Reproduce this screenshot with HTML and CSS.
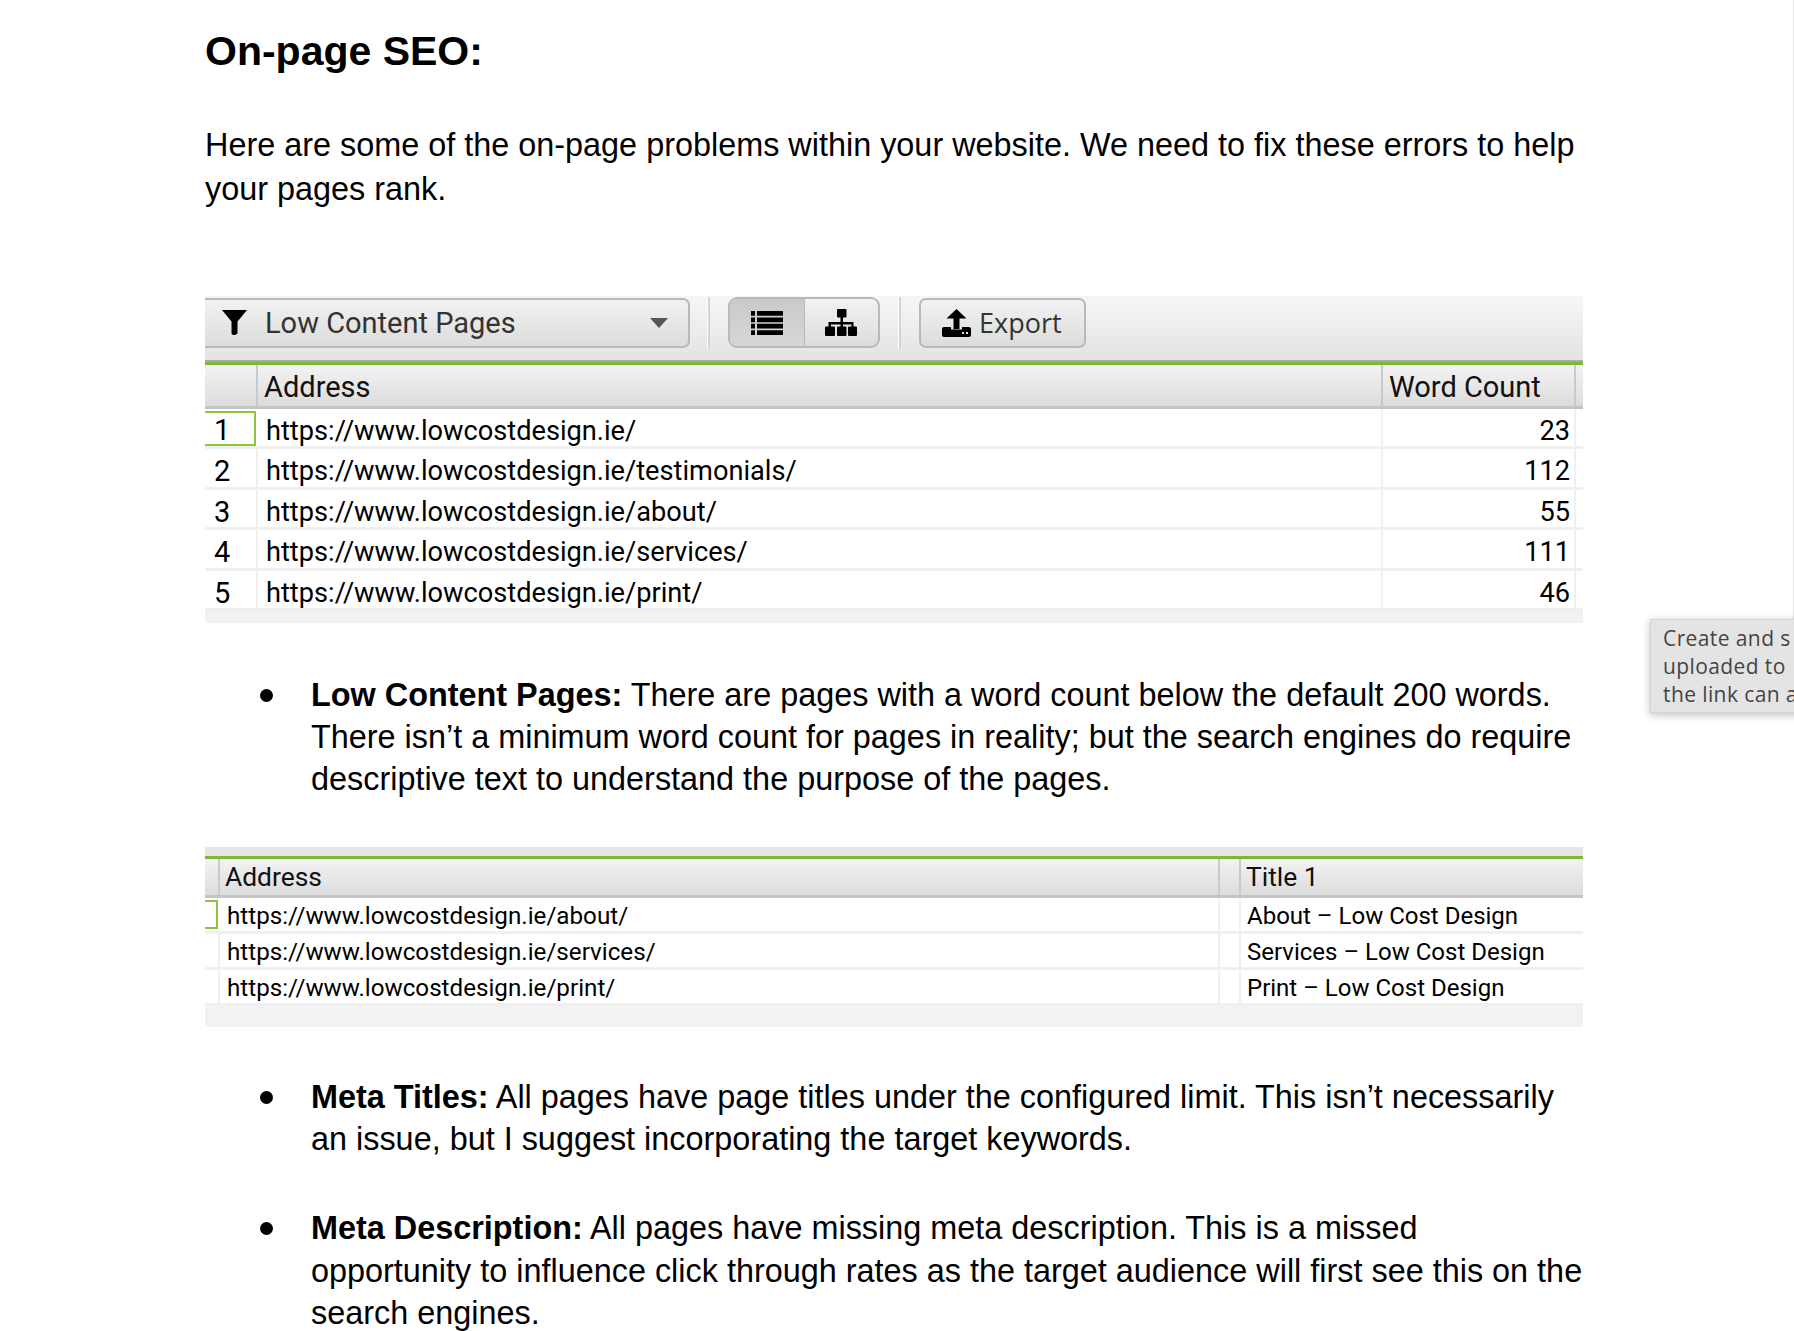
FILE: index.html
```html
<!DOCTYPE html>
<html lang="en">
<head>
  <meta charset="UTF-8">
  <title>On-page SEO</title>
  <link rel="stylesheet" href="styles.css">
</head>
<body>
  <div class="doc">
    <h1>On-page SEO:</h1>
    <p class="intro">Here are some of the on-page problems within your website. We need to fix these errors to help your pages rank.</p>

    <div class="shot shot-one">
      <div class="toolbar">
        <div class="btn filter">
          <svg class="icon-funnel" viewBox="0 0 25 25"><path d="M0 0h25L15.500 11.500V23.500L13 25H11L9.500 23.500V11.500z"/></svg>
          <span>Low Content Pages</span>
          <svg class="icon-caret" viewBox="0 0 18 10"><path d="M0 0h18L9 10z"/></svg>
        </div>
        <div class="sep"></div>
        <div class="toggle">
          <div class="toggle-item active">
            <svg class="icon-list" viewBox="0 0 32 24"><path d="M0 0h4v4.800H0zM6 0h26v4.800H6zM0 6.400h4v4.800H0zM6 6.400h26v4.800H6zM0 12.800h4v4.800H0zM6 12.800h26v4.800H6zM0 19.200h4V24H0zM6 19.200h26V24H6z"/></svg>
          </div>
          <div class="toggle-item">
            <svg class="icon-tree" viewBox="0 0 32 27"><path d="M12 1q0-1 1-1h7.500q1 0 1 1v6.500q0 1-1 1H18V13h10.500v4.500h2.500q1 0 1 1V26q0 1-1 1h-7q-1 0-1-1v-7.500q0-1 1-1h2.500v-2H18v2h2.500q1 0 1 1V26q0 1-1 1H13q-1 0-1-1v-7.500q0-1 1-1h2.500v-2H6v2h3q1 0 1 1V26q0 1-1 1H1q-1 0-1-1v-7.500q0-1 1-1h2.500V13h12V8.500H13q-1 0-1-1z"/></svg>
          </div>
        </div>
        <div class="sep"></div>
        <div class="btn export">
          <svg class="icon-upload" viewBox="0 0 29 28"><path d="M14.500 0l10 9.500h-7V20h-6V9.500h-7zM2 18h7v2.500h11V18h7q2 0 2 2v6q0 2-2 2H2q-2 0-2-2v-6q0-2 2-2z"/><path class="dots" d="M20 23h2v2h-2zM24 23h2v2h-2z"/></svg>
          <span>Export</span>
        </div>
      </div>
      <div class="grid-head">
        <div class="cell">&nbsp;</div>
        <div class="cell">Address</div>
        <div class="cell">Word Count</div>
        <div class="cell">&nbsp;</div>
      </div>
      <div class="grid-row">
        <div class="cell num picked">1</div>
        <div class="cell">https://www.lowcostdesign.ie/</div>
        <div class="cell count">23</div>
        <div class="cell"></div>
      </div>
      <div class="grid-row">
        <div class="cell num">2</div>
        <div class="cell">https://www.lowcostdesign.ie/testimonials/</div>
        <div class="cell count">112</div>
        <div class="cell"></div>
      </div>
      <div class="grid-row">
        <div class="cell num">3</div>
        <div class="cell">https://www.lowcostdesign.ie/about/</div>
        <div class="cell count">55</div>
        <div class="cell"></div>
      </div>
      <div class="grid-row">
        <div class="cell num">4</div>
        <div class="cell">https://www.lowcostdesign.ie/services/</div>
        <div class="cell count">111</div>
        <div class="cell"></div>
      </div>
      <div class="grid-row">
        <div class="cell num">5</div>
        <div class="cell">https://www.lowcostdesign.ie/print/</div>
        <div class="cell count">46</div>
        <div class="cell"></div>
      </div>
      <div class="grid-foot"></div>
    </div>

    <ul class="notes notes-one">
      <li><b>Low Content Pages:</b> There are pages with a word count below the default 200 words. There isn’t a minimum word count for pages in reality; but the search engines do require descriptive text to understand the purpose of the pages.</li>
    </ul>

    <div class="shot shot-two">
      <div class="strip"></div>
      <div class="grid-head">
        <div class="cell">&nbsp;</div>
        <div class="cell">Address</div>
        <div class="cell">&nbsp;</div>
        <div class="cell">Title 1</div>
      </div>
      <div class="grid-row">
        <div class="cell picked"></div>
        <div class="cell">https://www.lowcostdesign.ie/about/</div>
        <div class="cell"></div>
        <div class="cell title">About – Low Cost Design</div>
      </div>
      <div class="grid-row">
        <div class="cell"></div>
        <div class="cell">https://www.lowcostdesign.ie/services/</div>
        <div class="cell"></div>
        <div class="cell title">Services – Low Cost Design</div>
      </div>
      <div class="grid-row">
        <div class="cell"></div>
        <div class="cell">https://www.lowcostdesign.ie/print/</div>
        <div class="cell"></div>
        <div class="cell title">Print – Low Cost Design</div>
      </div>
      <div class="grid-foot"></div>
    </div>

    <ul class="notes notes-two">
      <li><b>Meta Titles:</b> All pages have page titles under the configured limit. This isn’t necessarily an issue, but I suggest incorporating the target keywords.</li>
      <li><b>Meta Description:</b> All pages have missing meta description. This is a missed opportunity to influence click through rates as the target audience will first see this on the search engines.</li>
    </ul>
  </div>

  <div class="edge"></div>
  <div class="tooltip">Create and s<br>uploaded to<br>the link can a</div>
</body>
</html>
```

FILE: styles.css
```css
html, body {
  margin: 0;
  height: 100%;
  overflow: hidden;
}
body {
  background: #fff;
  color: #000;
  font-family: "Liberation Sans", Arial, sans-serif;
}
.doc {
  width: 1379px;
  margin-left: 205px;
  padding-top: 26px;
}
h1 {
  margin: 0;
  font-size: 41px;
  line-height: 50px;
  font-weight: bold;
}
.intro {
  margin: 48px 0 0;
  font-size: 32.400px;
  line-height: 43.500px;
}

.shot {
  margin-right: 1px;
  font-family: Roboto, sans-serif;
}
.shot-one {
  margin-top: 85px;
  font-size: 29px;
}
.toolbar {
  position: relative;
  display: flex;
  align-items: center;
  box-sizing: border-box;
  height: 66px;
  padding-bottom: 11px;
  gap: 18px;
  background: linear-gradient(#f6f6f6, #e3e3e3);
  border-bottom: 2px solid #a9a9a9;
  box-shadow: 0 3px 0 #7ab93d;
}
.btn {
  display: flex;
  align-items: center;
  box-sizing: border-box;
  height: 50px;
  color: #333;
  background: linear-gradient(#f2f2f2, #dcdcdc);
  border: 2px solid #b9b9b9;
  border-radius: 7px;
}
.filter {
  width: 485px;
  margin-right: -1px;
  border-left: 0;
  border-radius: 0 7px 7px 0;
  padding-left: 17px;
}
.filter span {
  margin-left: 18px;
  flex: 1;
}
.icon-funnel {
  width: 25px;
  height: 25px;
}
.icon-caret {
  width: 18px;
  height: 10px;
  margin-right: 20px;
  fill: #555;
}
.sep {
  box-sizing: border-box;
  width: 3px;
  height: 52px;
  background: #d4d4d4;
  border-left: 1px solid #fff;
}
.toggle {
  display: flex;
  box-sizing: border-box;
  width: 152px;
  height: 51px;
  border: 2px solid #b9b9b9;
  border-radius: 9px;
  overflow: hidden;
  background: linear-gradient(#f2f2f2, #dcdcdc);
}
.toggle-item {
  flex: 1;
  display: flex;
  align-items: center;
  justify-content: center;
}
.toggle-item.active {
  background: linear-gradient(#c9c9c9, #d6d6d6);
  border-right: 1px solid #b9b9b9;
}
.icon-list {
  width: 32px;
  height: 24px;
}
.icon-tree {
  width: 32px;
  height: 27px;
}
.export {
  width: 167px;
  padding-left: 21px;
  gap: 8px;
  font-family: "Open Sans", sans-serif;
  font-size: 27px;
}
.icon-upload {
  width: 29px;
  height: 28px;
}
.icon-upload .dots {
  fill: #ddd;
}

.grid-head,
.grid-row {
  display: grid;
  grid-template-rows: minmax(0, 1fr);
}
.shot-one .grid-head,
.shot-one .grid-row {
  grid-template-columns: 53px 1125px 193px 7px;
}
.shot-two .grid-head,
.shot-two .grid-row {
  grid-template-columns: 15px 1000px 21px 342px;
}
.grid-head {
  box-sizing: border-box;
  background: linear-gradient(#f5f5f5, #dcdcdc);
  border-bottom: 3px solid #c4c4c4;
  color: #111;
}
.shot-one .grid-head {
  height: 47px;
  padding-top: 3px;
  line-height: 44px;
}
.grid-head .cell {
  box-sizing: border-box;
  padding-left: 6px;
  border-right: 2px solid #c9c9c9;
  white-space: nowrap;
}
.grid-head .cell:last-child {
  border-right: 0;
}
.grid-row {
  box-sizing: border-box;
  height: 40.400px;
  border-bottom: 3px solid #f0f0f0;
  font-size: 27.200px;
  line-height: 44px;
}
.grid-row .cell {
  box-sizing: border-box;
  padding-left: 8px;
  border-right: 2px solid #f0f0f0;
  white-space: nowrap;
}
.grid-row .cell:last-child {
  border-right: 0;
}
.grid-row .num {
  padding-left: 9px;
  font-size: 29px;
}
.grid-row .count {
  padding: 0 4px 0 0;
  text-align: right;
}
.grid-row .picked {
  border: 2px solid #8cc63f;
  border-left: 0;
  margin: 2px 2px 0 0;
  line-height: 35px;
}
.grid-foot {
  background: #f2f2f2;
}
.shot-one .grid-foot {
  height: 12px;
}

.notes {
  margin: 0;
  padding: 0 0 0 106px;
  list-style: none;
  font-size: 32.400px;
  line-height: 42.100px;
}
.notes li {
  position: relative;
}
.notes li::before {
  content: "";
  position: absolute;
  left: -51px;
  top: 15px;
  width: 13px;
  height: 13px;
  border-radius: 50%;
  background: #000;
}
.notes-one {
  margin-top: 51px;
}
.notes-two {
  margin-top: 49px;
}
.notes-two li + li {
  margin-top: 47px;
}

.shot-two {
  margin-top: 47px;
  font-size: 26.400px;
}
.strip {
  position: relative;
  height: 9px;
  background: #e6e6e6;
  box-shadow: 0 3px 0 #7ab93d;
}
.shot-two .grid-head {
  height: 42px;
  padding-top: 3px;
  line-height: 36px;
}
.shot-two .grid-head .cell {
  padding-left: 5px;
}
.shot-two .grid-row {
  height: 36px;
  font-size: 24.200px;
  line-height: 37px;
}
.shot-two .grid-row .cell {
  padding-left: 7px;
}
.shot-two .grid-row .title {
  padding-left: 6px;
  font-size: 24px;
}
.shot-two .grid-row .picked {
  margin: 2px 2px 2px 0;
}
.shot-two .grid-foot {
  height: 21px;
}

.edge {
  position: absolute;
  top: 0;
  right: 0;
  width: 1px;
  height: 619px;
  background: #e4e4e4;
}
.tooltip {
  position: absolute;
  left: 1650px;
  top: 619px;
  box-sizing: border-box;
  width: 200px;
  height: 94px;
  padding: 4px 12px;
  background: #e4e4e4;
  border: 1px solid #d4d4d4;
  color: #444;
  font-family: "Open Sans", sans-serif;
  font-size: 21px;
  letter-spacing: 0.400px;
  line-height: 28px;
  box-shadow: 0 2px 8px rgba(0, 0, 0, 0.25);
  white-space: nowrap;
}
```
